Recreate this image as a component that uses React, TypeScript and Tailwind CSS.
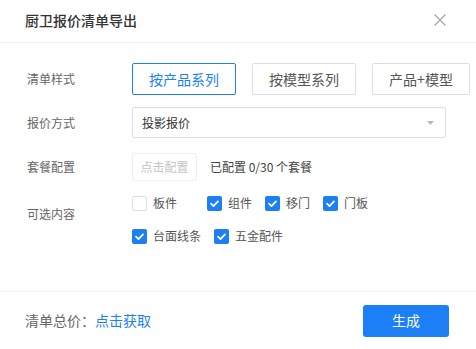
import { useState } from 'react';

const blue = 'bg-[#1c7ff6]';

function Check({ label, checked, onToggle }: { label: string; checked: boolean; onToggle: () => void }) {
  return (
    <button onClick={onToggle} className="flex items-center gap-[6px] h-[16px]">
      {checked ? (
        <span className={`w-[15px] h-[15px] rounded-[2px] ${blue} flex items-center justify-center`}>
          <svg width="11" height="11" viewBox="0 0 12 12">
            <path d="M2.2 6.2 L4.9 8.8 L9.8 3.6" fill="none" stroke="white" strokeWidth="1.9" strokeLinecap="round" strokeLinejoin="round" />
          </svg>
        </span>
      ) : (
        <span className="w-[15px] h-[15px] rounded-[2px] border border-[#dcdfe6] bg-white" />
      )}
      <span className="text-[12px] text-[#555]">{label}</span>
    </button>
  );
}

export default function App() {
  const [style, setStyle] = useState(0);
  const [items, setItems] = useState<Record<string, boolean>>({
    板件: false,
    组件: true,
    移门: true,
    门板: true,
    台面线条: true,
    五金配件: true,
  });
  const toggle = (k: string) => setItems({ ...items, [k]: !items[k] });

  const styles = [
    { label: '按产品系列', w: 'w-[104px]' },
    { label: '按模型系列', w: 'w-[104px]' },
    { label: '产品+模型', w: 'w-[98px]' },
  ];

  return (
    <div
      className="w-[476px] h-[349px] bg-white flex flex-col overflow-hidden"
      style={{ fontFamily: '"Noto Sans CJK SC", "Noto Sans", sans-serif' }}
    >
      <div className="h-[43px] shrink-0 border-b border-[#eeeeee] flex items-center justify-between pl-[25px] pr-[30px]">
        <span className="text-[14px] font-medium text-[#333] -mt-[2px]">厨卫报价清单导出</span>
        <svg width="12" height="12" viewBox="0 0 12 12" className="-mt-[2px]">
          <path d="M0.5 0.5 L11.5 11.5 M11.5 0.5 L0.5 11.5" stroke="#a8a8a8" strokeWidth="1.3" />
        </svg>
      </div>

      <div className="flex-1 pt-[20px] text-[12px]">
        <div className="flex items-center">
          <div className="w-[132px] pl-[27px] text-[#666]">清单样式</div>
          <div className="flex gap-[16px]">
            {styles.map((s, i) => (
              <button
                key={s.label}
                onClick={() => setStyle(i)}
                className={`${s.w} h-[32px] shrink-0 rounded-[2px] border text-[14px] ${
                  style === i ? 'border-[#1c7ff6] text-[#1c7ff6]' : 'border-[#dcdfe6] text-[#555]'
                }`}
              >
                {s.label}
              </button>
            ))}
          </div>
        </div>

        <div className="flex items-center mt-[12px]">
          <div className="w-[132px] pl-[27px] text-[#666]">报价方式</div>
          <div className="w-[314px] h-[31px] border border-[#dcdfe6] rounded-[2px] flex items-center justify-between pl-[9px] pr-[11px]">
            <span className="text-[#333]">投影报价</span>
            <svg width="7" height="4" viewBox="0 0 7 4">
              <path d="M0 0 L7 0 L3.5 4 Z" fill="#b8b8b8" />
            </svg>
          </div>
        </div>

        <div className="flex items-center mt-[15px]">
          <div className="w-[132px] pl-[27px] text-[#666]">套餐配置</div>
          <div className="w-[65px] h-[28px] border border-[#eeeeee] rounded-[3px] flex items-center justify-center text-[#c4c4c4]">
            点击配置
          </div>
          <span className="ml-[13px] text-[#444]">已配置 0/30 个套餐</span>
        </div>

        <div className="flex mt-[13px]">
          <div className="w-[132px] pl-[27px] pt-[11px] text-[#666]">可选内容</div>
          <div className="flex flex-col gap-[17px] pt-[1px]">
            <div className="flex">
              <div className="w-[75px]"><Check label="板件" checked={items['板件']} onToggle={() => toggle('板件')} /></div>
              <div className="w-[58px]"><Check label="组件" checked={items['组件']} onToggle={() => toggle('组件')} /></div>
              <div className="w-[58px]"><Check label="移门" checked={items['移门']} onToggle={() => toggle('移门')} /></div>
              <Check label="门板" checked={items['门板']} onToggle={() => toggle('门板')} />
            </div>
            <div className="flex">
              <div className="w-[82px]"><Check label="台面线条" checked={items['台面线条']} onToggle={() => toggle('台面线条')} /></div>
              <Check label="五金配件" checked={items['五金配件']} onToggle={() => toggle('五金配件')} />
            </div>
          </div>
        </div>
      </div>

      <div className="h-[58px] shrink-0 border-t border-[#eeeeee] flex items-center justify-between pl-[25px] pr-[27px]">
        <div className="text-[14px]">
          <span className="text-[#666]">清单总价：</span>
          <span className="text-[#1c7ff6]">点击获取</span>
        </div>
        <button className={`w-[86px] h-[32px] rounded-[3px] ${blue} text-white text-[14px]`}>生成</button>
      </div>
    </div>
  );
}
